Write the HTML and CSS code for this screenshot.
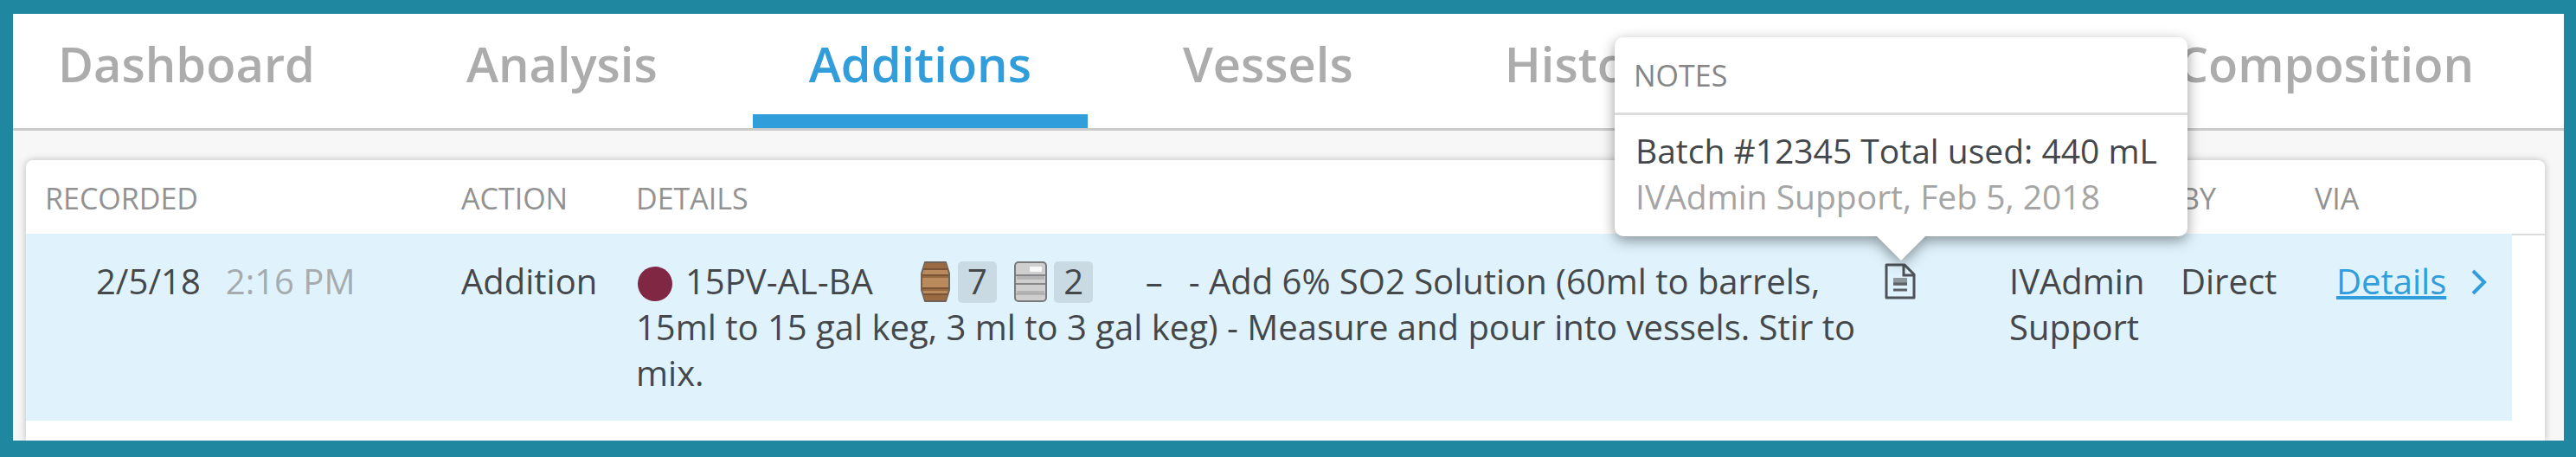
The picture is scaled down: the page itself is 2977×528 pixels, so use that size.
FILE: index.html
```html
<!DOCTYPE html>
<html lang="en">

<head>
    <meta charset="UTF-8">
    <meta name="viewport" content="width=device-width, initial-scale=1.0">
    <title>Additions</title>
    <link rel="stylesheet" href="styles.css">
</head>

<body>
    <div class="page">
        <nav class="tabs">
            <a href="#">Dashboard</a>
            <a href="#">Analysis</a>
            <a href="#" class="active">Additions</a>
            <a href="#">Vessels</a>
            <a href="#">History</a>
            <a href="#" class="last">Composition</a>
        </nav>
        <div class="card">
            <table class="log">
                <colgroup>
                    <col class="colRecorded">
                    <col class="colAction">
                    <col>
                    <col class="colNotes">
                    <col class="colUser">
                    <col class="colBy">
                    <col class="colVia">
                    <col class="colEdge">
                </colgroup>
                <thead>
                    <tr>
                        <th>RECORDED</th>
                        <th>ACTION</th>
                        <th>DETAILS</th>
                        <th></th>
                        <th></th>
                        <th>BY</th>
                        <th>VIA</th>
                        <th></th>
                    </tr>
                </thead>
                <tbody>
                    <tr>
                        <td class="recorded">2/5/18<span class="time">2:16 PM</span></td>
                        <td>Addition</td>
                        <td>
                            <span class="dot"></span><span class="lot">15PV-AL-BA</span>
                            <svg class="vessel" width="36" height="48" viewBox="0 0 36 48">
                                <path d="M6 1H30L34 14V33L30 46H6L2 33V14Z" fill="#b98a5c" stroke="#6f625a" stroke-width="2" stroke-linejoin="round" />
                                <path d="M6 2H30L32 8H4ZM4 39H32L30 45H6Z" fill="#9a6b42" />
                                <path d="M4 9H32M3 16H33M3 31H33M4 38H32" stroke="#7a5434" stroke-width="2" />
                                <path d="M3 18H33M3 33H33" stroke="#96683f" stroke-width="2" />
                            </svg><span class="count">7</span>
                            <svg class="vessel keg" width="38" height="48" viewBox="0 0 38 48">
                                <rect x="1" y="1" width="36" height="45" rx="4" fill="#cfcfcf" stroke="#77797b" stroke-width="2" />
                                <path d="M3 19H35M3 36H35" stroke="#b4b4b4" stroke-width="4" />
                                <path d="M2 16H36M2 26H36" stroke="#85878a" stroke-width="2" />
                                <path d="M2 38H36" stroke="#9c9ea0" stroke-width="1" />
                                <rect x="18" y="6" width="14" height="6" rx="1" fill="#f8f8f8" />
                            </svg><span class="count">2</span>
                            <span class="dash">–</span>- Add 6% SO2 Solution (60ml to barrels, 15ml to 15 gal keg, 3 ml to 3 gal keg) - Measure and pour into vessels. Stir to mix.
                        </td>
                        <td>
                            <div class="notes">
                                <button type="button" class="noteBtn" aria-label="Notes">
                                    <svg width="36" height="42" viewBox="0 0 36 42">
                                        <path d="M2 2H23L34 13V40H2Z" fill="none" stroke="#4d5357" stroke-width="3" stroke-linejoin="round" />
                                        <path d="M22 2V14H34" fill="none" stroke="#4d5357" stroke-width="3" />
                                        <path d="M10 17H26V26H10Z" fill="#8d969b" />
                                        <path d="M10 24H26M10 31H26" stroke="#5c6266" stroke-width="3" />
                                    </svg>
                                </button>
                                <div class="popover">
                                    <div class="popTitle">NOTES</div>
                                    <div class="popBody">
                                        <p>Batch #12345 Total used: 440 mL</p>
                                        <p class="author">IVAdmin Support, Feb 5, 2018</p>
                                    </div>
                                </div>
                            </div>
                        </td>
                        <td>IVAdmin Support</td>
                        <td>Direct</td>
                        <td class="via">
                            <a href="#">Details</a><svg class="arrow" width="20" height="32" viewBox="0 0 20 32">
                                <path d="M3 3L16 16L3 29" fill="none" stroke="#319ddb" stroke-width="4" />
                            </svg>
                        </td>
                        <td class="edge"></td>
                    </tr>
                </tbody>
            </table>
        </div>
    </div>
</body>

</html>
```

FILE: styles.css
```css
* {
    padding: 0;
    margin: 0;
    box-sizing: border-box;
}

body {
    padding: 16px 14px 19px 15px;
    background: #1f87a0;
    color: #44484b;
    font: 40px/53px "Open Sans", "Noto Sans", sans-serif;
}

.page {
    background: #f7f7f7;
}

.tabs {
    display: flex;
    gap: 175px;
    height: 135px;
    padding: 0 104px 0 52px;
    background: #fff;
    border-bottom: 3px solid #cbcbcb;
}

.tabs a {
    position: relative;
    color: #acacac;
    font-size: 56px;
    font-weight: 600;
    line-height: 114px;
    text-decoration: none;
}

.tabs .active {
    color: #319ddb;
}

.tabs .active::after {
    content: "";
    position: absolute;
    left: -65px;
    right: -65px;
    bottom: 0;
    height: 16px;
    background: #319ddb;
}

.tabs .last {
    margin-left: auto;
}

.card {
    margin: 34px 22px 0 15px;
    padding-bottom: 23px;
    background: #fff;
    border-radius: 8px 8px 0 0;
    box-shadow: 0 0 8px rgba(0, 0, 0, .25);
    clip-path: inset(-300px -20px 0 -15px);
}

.log {
    width: 100%;
    table-layout: fixed;
    border-collapse: separate;
    border-spacing: 0;
}

.colRecorded {
    width: 481px;
}

.colAction {
    width: 202px;
}

.colNotes {
    width: 146px;
}

.colUser {
    width: 198px;
}

.colBy {
    width: 155px;
}

.colVia {
    width: 250px;
}

.colEdge {
    width: 38px;
}

.log th {
    padding: 21px 0 18px 22px;
    color: #929292;
    font-size: 34px;
    font-weight: 400;
    line-height: 46px;
    text-align: left;
}

.log td {
    padding: 28px 0 29px 22px;
    background: #e0f3fd;
    vertical-align: top;
}

.log .recorded {
    padding-left: 81px;
}

.log .edge {
    padding: 0;
    background: #fff;
    border-top: 2px solid #dcdcdc;
}

.time {
    margin-left: 29px;
    color: #a5abae;
}

.dot {
    display: inline-block;
    width: 40px;
    height: 40px;
    margin: 10px 15px 0 2px;
    border-radius: 50%;
    background: #7f2743;
    vertical-align: top;
}

.lot {
    margin-right: 44px;
}

.vessel {
    margin: 4px 8px 0 0;
    vertical-align: top;
}

.keg {
    margin-left: 10px;
}

.count {
    display: inline-block;
    height: 48px;
    margin-top: 4px;
    padding: 0 11px;
    border-radius: 5px;
    background: #c9dae2;
    line-height: 46px;
    vertical-align: top;
}

.dash {
    margin: 0 30px 0 50px;
}

.notes {
    position: relative;
    width: 40px;
}

.noteBtn {
    display: block;
    width: 40px;
    height: 53px;
    background: none;
    border: 0;
    cursor: pointer;
}

.noteBtn svg {
    display: block;
    margin: 0 auto;
}

.popover {
    position: absolute;
    left: 50%;
    bottom: 78px;
    width: 662px;
    margin-left: -330px;
    background: #fff;
    border-radius: 10px;
    filter: drop-shadow(0 5px 8px rgba(0, 0, 0, .4));
    white-space: nowrap;
}

.popover::after {
    content: "";
    position: absolute;
    left: 50%;
    top: 100%;
    margin-left: -28px;
    border: 28px solid transparent;
    border-top-color: #fff;
    border-bottom: 0;
}

.popTitle {
    padding: 21px 20px 20px 22px;
    border-bottom: 3px solid #dcdcdc;
    color: #858585;
    font-size: 34px;
    line-height: 46px;
}

.popBody {
    padding: 14px 24px 20px;
    font-size: 39px;
}

.author {
    color: #a5a5a5;
}

.log .via {
    padding-left: 47px;
    white-space: nowrap;
}

.via a {
    color: #319ddb;
}

.arrow {
    margin: 12px 0 0 28px;
    vertical-align: top;
}
```
